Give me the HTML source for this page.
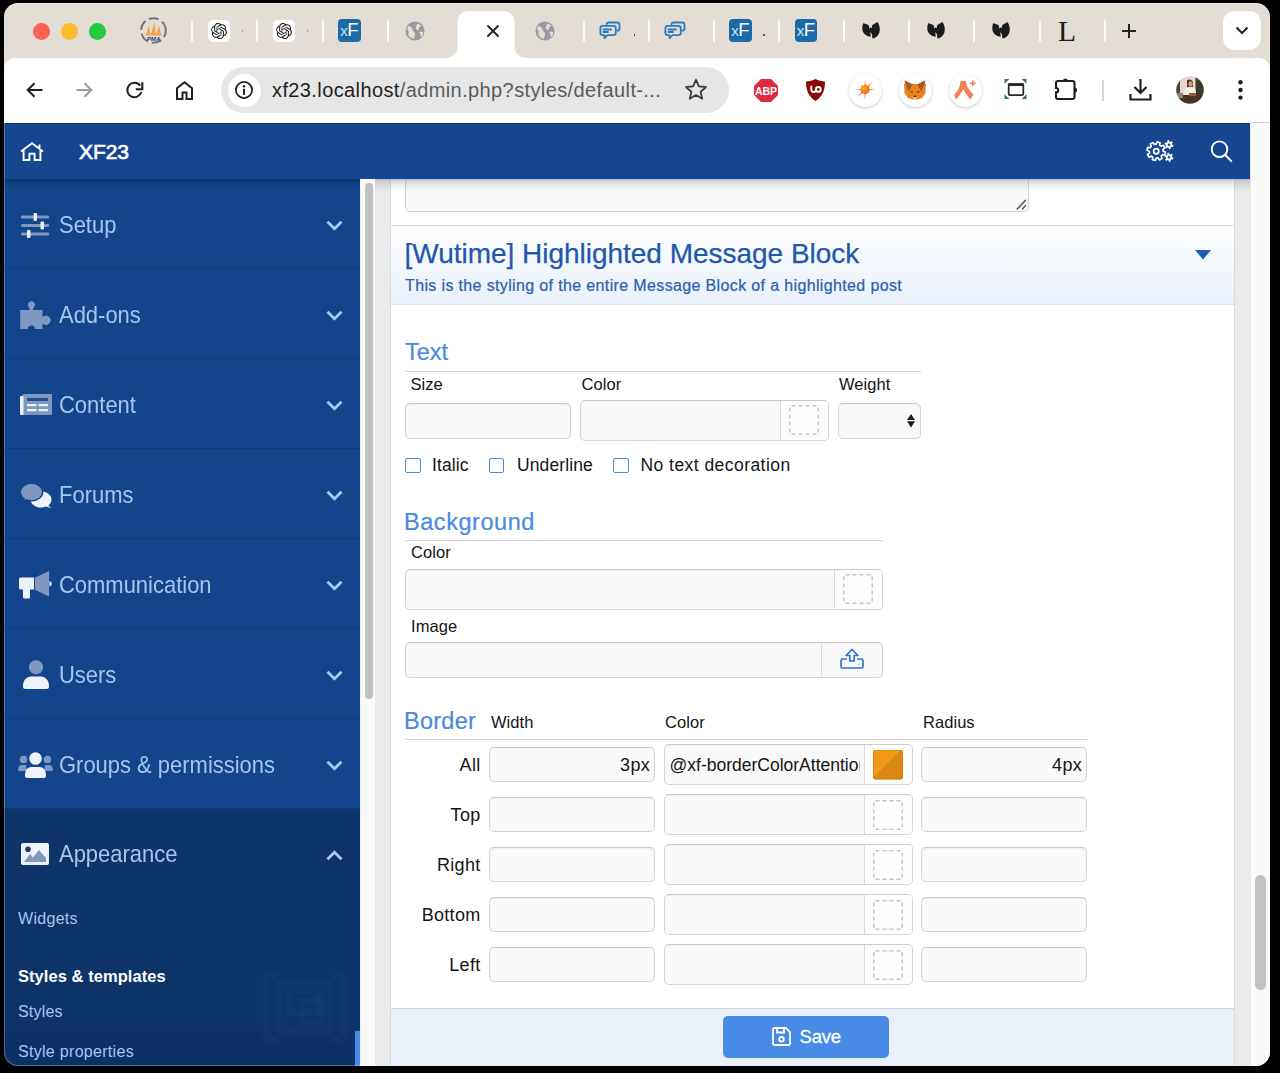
<!DOCTYPE html>
<html><head><meta charset="utf-8">
<style>
*{box-sizing:border-box;margin:0;padding:0}
html,body{width:1280px;height:1073px;overflow:hidden;background:#000;font-family:"Liberation Sans",sans-serif}
.a{position:absolute}
svg{position:absolute;overflow:visible}
#win{position:absolute;left:4px;top:3px;width:1266px;height:1063px;border-radius:14px;overflow:hidden;background:#e4ddd6}
/* coordinates inside #win are page coords minus (4,3) -> use page coords via #pg wrapper */
#pg{position:absolute;left:-4px;top:-3px;width:1280px;height:1073px}
.dot{position:absolute;width:17px;height:17px;border-radius:50%}
.sep{position:absolute;top:20px;width:2px;height:22px;background:#fbfaf9;border-radius:1px}
#toolbar{position:absolute;left:4px;top:58px;width:1266px;height:65px;background:#fff;border-radius:11px 11px 0 0}
#url{position:absolute;left:221px;top:67px;width:508px;height:46px;border-radius:23px;background:#e6e6e6}
#hdr{position:absolute;left:4px;top:123px;width:1246px;height:56px;background:#15468f;border-top:1px solid #0f3a76}
#side{position:absolute;left:4px;top:179px;width:356px;height:887px;background:#12458b;overflow:hidden}
#sscroll{position:absolute;left:360px;top:179px;width:15px;height:887px;background:#f8f8f8;border-left:1px solid #f0f0f0}
#content{position:absolute;left:375px;top:179px;width:875px;height:887px;background:#eaeaea;overflow:hidden}
#pscroll{position:absolute;left:1250px;top:123px;width:20px;height:943px;background:#f9f9f9;border-left:1px solid #e8e8e8}

.inp{position:absolute;background:#f9f9f9;border:1px solid #d5d5d5;border-top-color:#cbcbcb;border-radius:5px;box-shadow:inset 0 1px 1px rgba(0,0,0,.04)}
.lbl{position:absolute;font-size:16.5px;line-height:20px;color:#141414;white-space:nowrap;letter-spacing:0.05px}
.h3{position:absolute;font-size:23.5px;line-height:28px;color:#4a89dc;white-space:nowrap;-webkit-text-stroke:0.2px #4a89dc}
.rule{position:absolute;height:1px;background:#d3d3d3}
.swd{position:absolute;border:1.3px dashed #cdcdcd;border-radius:2px}
.cb{position:absolute;width:15.5px;height:15.5px;border:1.8px solid #4a8ad9;border-radius:2px;background:#fff}
.cbl{position:absolute;font-size:17.5px;line-height:22px;color:#141414;white-space:nowrap;letter-spacing:0.1px}
.rl{position:absolute;font-size:18px;line-height:22px;color:#141414;white-space:nowrap;text-align:right;width:80px;letter-spacing:0.3px}
</style></head><body>
<div id="win"><div id="pg">
  <!-- traffic lights -->
  <div class="dot" style="left:33px;top:22.5px;background:#fe5f57"></div>
  <div class="dot" style="left:61px;top:22.5px;background:#febc2e"></div>
  <div class="dot" style="left:88.5px;top:22.5px;background:#28c840"></div>


<!-- tab strip -->
<div class="sep" style="left:191.25px"></div>
<div class="sep" style="left:256.25px"></div>
<div class="sep" style="left:321.75px"></div>
<div class="sep" style="left:386.75px"></div>
<div class="sep" style="left:582.75px"></div>
<div class="sep" style="left:647.75px"></div>
<div class="sep" style="left:712.75px"></div>
<div class="sep" style="left:777.75px"></div>
<div class="sep" style="left:843.25px"></div>
<div class="sep" style="left:908.25px"></div>
<div class="sep" style="left:973.25px"></div>
<div class="sep" style="left:1038.75px"></div>
<div class="sep" style="left:1103.75px"></div>
<svg style="left:140px;top:17px" width="27" height="27" viewBox="0 0 27 27"><circle cx="13.500" cy="13.500" r="12.300" fill="none" stroke="#7a746f" stroke-width="2" stroke-dasharray="10 4" stroke-dashoffset="3"/><path d="M5.500 18.500C7 15 8 12 9 8.500L10.500 18.500zM10.500 18.500C12 14 13 10 14.500 5.500L16 18.500zM15.500 18.500C17 15 18 12 19 9L21.500 18.500z" fill="#f5a24a"/><text x="13.500" y="23.800" font-family="Liberation Sans" font-weight="700" font-style="italic" font-size="6.200" fill="#2e3f80" text-anchor="middle">PMA</text></svg>
<div class="a" style="left:208px;top:19.5px;width:22px;height:22.5px;border-radius:5px;background:#fff"></div>
<svg style="left:211.0px;top:22.5px" width="16" height="16" viewBox="0 0 24 24"><path fill="#1a1a1a" d="M22.2819 9.8211a5.9847 5.9847 0 0 0-.5157-4.9108 6.0462 6.0462 0 0 0-6.5098-2.9A6.0651 6.0651 0 0 0 4.9807 4.1818a5.9847 5.9847 0 0 0-3.9977 2.9 6.0462 6.0462 0 0 0 .7427 7.0966 5.98 5.98 0 0 0 .511 4.9107 6.051 6.051 0 0 0 6.5146 2.9001A5.9847 5.9847 0 0 0 13.2599 24a6.0557 6.0557 0 0 0 5.7718-4.2058 5.9894 5.9894 0 0 0 3.9977-2.9001 6.0557 6.0557 0 0 0-.7475-7.0729zm-9.022 12.6081a4.4755 4.4755 0 0 1-2.8764-1.0408l.1419-.0804 4.7783-2.7582a.7948.7948 0 0 0 .3927-.6813v-6.7369l2.02 1.1686a.071.071 0 0 1 .038.052v5.5826a4.504 4.504 0 0 1-4.4945 4.4944zm-9.6607-4.1254a4.4708 4.4708 0 0 1-.5346-3.0137l.142.0852 4.783 2.7582a.7712.7712 0 0 0 .7806 0l5.8428-3.3685v2.3324a.0804.0804 0 0 1-.0332.0615L9.74 19.9502a4.4992 4.4992 0 0 1-6.1408-1.6464zM2.3408 7.8956a4.485 4.485 0 0 1 2.3655-1.9728V11.6a.7664.7664 0 0 0 .3879.6765l5.8144 3.3543-2.0201 1.1685a.0757.0757 0 0 1-.071 0l-4.8303-2.7865A4.504 4.504 0 0 1 2.3408 7.872zm16.5963 3.8558L13.1038 8.364 15.1192 7.2a.0757.0757 0 0 1 .071 0l4.8303 2.7913a4.4944 4.4944 0 0 1-.6765 8.1042v-5.6772a.79.79 0 0 0-.407-.667zm2.0107-3.0231l-.142-.0852-4.7735-2.7818a.7759.7759 0 0 0-.7854 0L9.409 9.2297V6.8974a.0662.0662 0 0 1 .0284-.0615l4.8303-2.7866a4.4992 4.4992 0 0 1 6.6802 4.66zM8.3065 12.863l-2.02-1.1638a.0804.0804 0 0 1-.038-.0567V6.0742a4.4992 4.4992 0 0 1 7.3757-3.4537l-.142.0805L8.704 5.459a.7948.7948 0 0 0-.3927.6813zm1.0976-2.3654l2.602-1.4998 2.6069 1.4998v2.9994l-2.5974 1.4997-2.6067-1.4997Z"/></svg>
<div class="a" style="left:242px;top:30px;width:1px;height:2px;background:#999"></div>
<div class="a" style="left:273px;top:19.5px;width:22px;height:22.5px;border-radius:5px;background:#fff"></div>
<svg style="left:276.0px;top:22.5px" width="16" height="16" viewBox="0 0 24 24"><path fill="#1a1a1a" d="M22.2819 9.8211a5.9847 5.9847 0 0 0-.5157-4.9108 6.0462 6.0462 0 0 0-6.5098-2.9A6.0651 6.0651 0 0 0 4.9807 4.1818a5.9847 5.9847 0 0 0-3.9977 2.9 6.0462 6.0462 0 0 0 .7427 7.0966 5.98 5.98 0 0 0 .511 4.9107 6.051 6.051 0 0 0 6.5146 2.9001A5.9847 5.9847 0 0 0 13.2599 24a6.0557 6.0557 0 0 0 5.7718-4.2058 5.9894 5.9894 0 0 0 3.9977-2.9001 6.0557 6.0557 0 0 0-.7475-7.0729zm-9.022 12.6081a4.4755 4.4755 0 0 1-2.8764-1.0408l.1419-.0804 4.7783-2.7582a.7948.7948 0 0 0 .3927-.6813v-6.7369l2.02 1.1686a.071.071 0 0 1 .038.052v5.5826a4.504 4.504 0 0 1-4.4945 4.4944zm-9.6607-4.1254a4.4708 4.4708 0 0 1-.5346-3.0137l.142.0852 4.783 2.7582a.7712.7712 0 0 0 .7806 0l5.8428-3.3685v2.3324a.0804.0804 0 0 1-.0332.0615L9.74 19.9502a4.4992 4.4992 0 0 1-6.1408-1.6464zM2.3408 7.8956a4.485 4.485 0 0 1 2.3655-1.9728V11.6a.7664.7664 0 0 0 .3879.6765l5.8144 3.3543-2.0201 1.1685a.0757.0757 0 0 1-.071 0l-4.8303-2.7865A4.504 4.504 0 0 1 2.3408 7.872zm16.5963 3.8558L13.1038 8.364 15.1192 7.2a.0757.0757 0 0 1 .071 0l4.8303 2.7913a4.4944 4.4944 0 0 1-.6765 8.1042v-5.6772a.79.79 0 0 0-.407-.667zm2.0107-3.0231l-.142-.0852-4.7735-2.7818a.7759.7759 0 0 0-.7854 0L9.409 9.2297V6.8974a.0662.0662 0 0 1 .0284-.0615l4.8303-2.7866a4.4992 4.4992 0 0 1 6.6802 4.66zM8.3065 12.863l-2.02-1.1638a.0804.0804 0 0 1-.038-.0567V6.0742a4.4992 4.4992 0 0 1 7.3757-3.4537l-.142.0805L8.704 5.459a.7948.7948 0 0 0-.3927.6813zm1.0976-2.3654l2.602-1.4998 2.6069 1.4998v2.9994l-2.5974 1.4997-2.6067-1.4997Z"/></svg>
<div class="a" style="left:306.5px;top:30px;width:1px;height:2px;background:#999"></div>
<div class="a" style="left:338.0px;top:19px;width:22.5px;height:22.5px;border-radius:4px;background:#1b6aa6;color:#fff;font-size:15px;line-height:22px;text-align:center;letter-spacing:-0.3px"><span style="color:#cfe4f4">x</span><span style="font-size:18.5px">F</span></div>
<svg style="left:404.5px;top:21px" width="20" height="20" viewBox="0 0 20 20"><circle cx="10" cy="10" r="9.5" fill="#979a9e"/>
<path d="M3 5c2 0 3 1 4 2s0 2 1 3 2 1 2 3-1 3-1 5c-3-.5-5-2.5-6-5 1-1 1-2 0-3.5S2.5 6.5 3 5zM12 2.5c2 .5 3 1 4.5 2.5-1 .5-2 .5-2.5 1.5s.5 2-.5 2.5-2-.5-2.5-1.5 0-2 .5-3 .5-1 .5-2zM18 11c.5 2-.5 4-2 5.5-.5-1 0-2-.5-3s-1.5-1.5-1-2.5 2-.5 3.500 0z" fill="#e4ddd6"/></svg>
<svg style="left:444px;top:11px" width="84" height="47" viewBox="0 0 84 47"><path d="M0 47c8 0 13.5-4 13.5-11V11C13.5 5 18 0 24 0h36c6 0 10.5 5 10.5 11v25c0 7 5.5 11 13.5 11z" fill="#fff"/></svg>
<svg style="left:486.5px;top:25px" width="12" height="12" viewBox="0 0 12 12"><path d="M1 1l10 10M11 1L1 11" stroke="#1e1e1e" stroke-width="1.8" stroke-linecap="round"/></svg>
<svg style="left:535px;top:21px" width="20" height="20" viewBox="0 0 20 20"><circle cx="10" cy="10" r="9.5" fill="#979a9e"/>
<path d="M3 5c2 0 3 1 4 2s0 2 1 3 2 1 2 3-1 3-1 5c-3-.5-5-2.5-6-5 1-1 1-2 0-3.5S2.5 6.5 3 5zM12 2.5c2 .5 3 1 4.5 2.5-1 .5-2 .5-2.5 1.5s.5 2-.5 2.5-2-.5-2.5-1.5 0-2 .5-3 .5-1 .5-2zM18 11c.5 2-.5 4-2 5.5-.5-1 0-2-.5-3s-1.5-1.5-1-2.5 2-.5 3.500 0z" fill="#e4ddd6"/></svg>
<svg style="left:599px;top:20.5px" width="22" height="20" viewBox="0 0 22 20"><g fill="none" stroke="#2a7bbb" stroke-width="1.8" stroke-linejoin="round" stroke-linecap="round">
<path d="M7.5 3.3c.3-1.2 1-1.8 2.300-1.8h8.4c1.3 0 2.300 1 2.300 2.300v3.6c0 1.2-.9 2.2-2.1 2.3"/>
<path d="M3.8 4.8h10.6c1.4 0 2.4 1 2.4 2.4v4.5c0 1.4-1 2.4-2.4 2.4H8.5l-3 3v-3H3.8c-1.4 0-2.4-1-2.4-2.4V7.2c0-1.4 1-2.4 2.4-2.4z"/>
<path d="M4.5 8.5h7.5M4.5 11h4.5"/></g></svg>
<div class="a" style="left:633.5px;top:34px;width:1.5px;height:1.5px;background:#555"></div>
<svg style="left:664px;top:20.5px" width="22" height="20" viewBox="0 0 22 20"><g fill="none" stroke="#2a7bbb" stroke-width="1.8" stroke-linejoin="round" stroke-linecap="round">
<path d="M7.5 3.3c.3-1.2 1-1.8 2.300-1.8h8.4c1.3 0 2.300 1 2.300 2.300v3.6c0 1.2-.9 2.2-2.1 2.3"/>
<path d="M3.8 4.8h10.6c1.4 0 2.4 1 2.4 2.4v4.5c0 1.4-1 2.4-2.4 2.4H8.5l-3 3v-3H3.8c-1.4 0-2.4-1-2.4-2.4V7.2c0-1.4 1-2.4 2.4-2.4z"/>
<path d="M4.5 8.5h7.5M4.5 11h4.5"/></g></svg>
<div class="a" style="left:729.0px;top:19px;width:22.5px;height:22.5px;border-radius:4px;background:#1b6aa6;color:#fff;font-size:15px;line-height:22px;text-align:center;letter-spacing:-0.3px"><span style="color:#cfe4f4">x</span><span style="font-size:18.5px">F</span></div>
<div class="a" style="left:763px;top:34px;width:1.5px;height:1.5px;background:#555"></div>
<div class="a" style="left:794.5px;top:19px;width:22.5px;height:22.5px;border-radius:4px;background:#1b6aa6;color:#fff;font-size:15px;line-height:22px;text-align:center;letter-spacing:-0.3px"><span style="color:#cfe4f4">x</span><span style="font-size:18.5px">F</span></div>
<svg style="left:861.5px;top:22px" width="19" height="17" viewBox="0 0 19 17"><path d="M1.2 1.2C3 1.600 5 2.400 6.700 3.300L7.400 6.700 8.600 5.200 9.600 6.200 10.300 3C12 2 13.800 1 15.400 .1C17.600 3 18.400 7 17.400 10.500 16.200 14 13.500 16 10.300 16.600 10.500 13.500 9.800 11 8.100 10.300 8.600 11.500 8.800 13 8.600 14.700 5 14.500 1.800 12.500.6 9 0 6.500.3 3.500 1.200 1.200Z" fill="#1b1b1b"/></svg><svg style="left:927.0px;top:22px" width="19" height="17" viewBox="0 0 19 17"><path d="M1.2 1.2C3 1.600 5 2.400 6.700 3.300L7.400 6.700 8.600 5.200 9.600 6.200 10.300 3C12 2 13.800 1 15.400 .1C17.600 3 18.400 7 17.400 10.500 16.200 14 13.500 16 10.300 16.600 10.500 13.500 9.800 11 8.100 10.300 8.600 11.500 8.800 13 8.600 14.700 5 14.500 1.800 12.500.6 9 0 6.500.3 3.500 1.200 1.200Z" fill="#1b1b1b"/></svg><svg style="left:992.0px;top:22px" width="19" height="17" viewBox="0 0 19 17"><path d="M1.2 1.2C3 1.600 5 2.400 6.700 3.300L7.400 6.700 8.600 5.200 9.600 6.200 10.300 3C12 2 13.800 1 15.400 .1C17.600 3 18.400 7 17.400 10.500 16.200 14 13.500 16 10.300 16.600 10.500 13.500 9.800 11 8.100 10.300 8.600 11.500 8.800 13 8.600 14.700 5 14.500 1.800 12.500.6 9 0 6.500.3 3.500 1.200 1.200Z" fill="#1b1b1b"/></svg>
<div class="a" style="left:1058px;top:14px;font-family:'Liberation Serif';font-size:29.5px;line-height:34px;color:#1b1b1b">L</div>
<svg style="left:1121px;top:23px" width="16" height="16" viewBox="0 0 16 16"><path d="M8 1v14M1 8h14" stroke="#222" stroke-width="2"/></svg>
<div class="a" style="left:1223px;top:11px;width:38px;height:39px;border-radius:12px;background:#fff"></div>
<svg style="left:1235px;top:26px" width="14" height="9" viewBox="0 0 14 9"><path d="M1.5 1.5l5.5 5.5 5.5-5.5" fill="none" stroke="#222" stroke-width="2"/></svg>

  <div id="toolbar"></div>
  <div id="url"></div>

  <!-- toolbar icons -->
  <svg style="left:26px;top:82px" width="17" height="16" viewBox="0 0 17 16"><path d="M16.5 8H2M8.5 1.2L1.7 8l6.8 6.8" fill="none" stroke="#1f1f1f" stroke-width="2"/></svg>
  <svg style="left:76px;top:82px" width="17" height="16" viewBox="0 0 17 16"><path d="M.5 8H15M8.5 1.2L15.3 8l-6.8 6.8" fill="none" stroke="#9b9b9b" stroke-width="2"/></svg>
  <svg style="left:126px;top:82px" width="17" height="17" viewBox="0 0 17 17"><path d="M15.400 10A7.200 7.200 0 1 1 14.200 3.600" fill="none" stroke="#1f1f1f" stroke-width="2"/><path d="M16.300 .3V7.300H9.800" fill="none" stroke="#1f1f1f" stroke-width="2.100"/></svg>
  <svg style="left:176px;top:81px" width="17" height="19" viewBox="0 0 17 19"><path d="M1 18V7.2L8.5 1.3 16 7.2V18h-5.5v-6.5h-4V18z" fill="none" stroke="#1f1f1f" stroke-width="2" stroke-linejoin="miter"/></svg>
  <div class="a" style="left:227.5px;top:73.5px;width:33px;height:33px;border-radius:50%;background:#fff"></div>
  <svg style="left:235px;top:81px" width="18" height="18" viewBox="0 0 18 18"><circle cx="9" cy="9" r="8.1" fill="none" stroke="#1f1f1f" stroke-width="1.8"/><circle cx="9" cy="5.3" r="1.2" fill="#1f1f1f"/><path d="M9 7.8v6" stroke="#1f1f1f" stroke-width="1.9"/></svg>
  <div class="a" style="left:272px;top:77px;font-size:20px;line-height:26px;letter-spacing:0.39px;color:#1f1f1f;white-space:nowrap">xf23.localhost<span style="color:#5b5b5b">/admin.php?styles/default-...</span></div>
  <svg style="left:684px;top:78px" width="24" height="23" viewBox="0 0 24 23"><path d="M12 1.8l2.9 6.6 7.1.6-5.400 4.7 1.600 7-6.200-3.700-6.200 3.700 1.600-7L2 9l7.1-.6z" fill="none" stroke="#3a3a3a" stroke-width="1.8" stroke-linejoin="round"/></svg>
  <svg style="left:753.5px;top:78.5px" width="24" height="23" viewBox="0 0 24 23"><path d="M7 0h10l7 7v9l-7 7H7l-7-7V7z" fill="#e0283f"/><text x="12" y="16" font-family="Liberation Sans" font-weight="700" font-size="10.5" fill="#fff" text-anchor="middle">ABP</text></svg>
  <svg style="left:806px;top:79px" width="19" height="22" viewBox="0 0 19 22"><path d="M9.500 0C6.500 1.500 3.500 2.500 0 2.500c0 9 2.500 15 9.500 19.500C16.500 17.500 19 11.500 19 2.500 15.500 2.500 12.500 1.500 9.500 0z" fill="#8a0808"/><path d="M5.300 6.800v3.800a2.400 2.400 0 0 0 4.800 0" fill="none" stroke="#fff" stroke-width="1.900"/><circle cx="12.300" cy="10.400" r="2.400" fill="none" stroke="#fff" stroke-width="1.900"/></svg>
  <div class="a" style="left:848.5px;top:73.5px;width:33px;height:33px;border-radius:50%;background:#fff;box-shadow:0 1px 3px rgba(0,0,0,.22)"></div>
  <div class="a" style="left:898.5px;top:73.5px;width:33px;height:33px;border-radius:50%;background:#fff;box-shadow:0 1px 3px rgba(0,0,0,.22)"></div>
  <div class="a" style="left:948.5px;top:73.5px;width:33px;height:33px;border-radius:50%;background:#fff;box-shadow:0 1px 3px rgba(0,0,0,.22)"></div>
  <svg style="left:855px;top:80px" width="22" height="22" viewBox="0 0 22 22"><defs><radialGradient id="sg" cx="40%" cy="40%" r="60%"><stop offset="0" stop-color="#ffb21a"/><stop offset="1" stop-color="#f0621a"/></radialGradient></defs><path d="M11.10 9.50L10.00 0.00L8.90 9.50ZM8.90 9.50L10.00 20.00L11.10 9.50ZM10.00 10.60L20.50 9.50L10.00 8.40ZM10.00 8.40L0.00 9.50L10.00 10.60ZM10.78 10.28L18.13 1.37L9.22 8.72ZM9.22 8.72L1.87 17.63L10.78 10.28ZM10.78 8.72L5.76 5.26L9.22 10.28ZM9.22 10.28L14.24 13.74L10.78 8.72Z" fill="#f27a2c"/><circle cx="10" cy="9.5" r="4.600" fill="url(#sg)"/></svg>
  <svg style="left:904px;top:80px" width="22" height="20" viewBox="0 0 22 20"><path d="M0 4L3 1.500 8 4H14L19 1.500 22 4 21.500 13 18 18 13 19.500H9L4 18 .5 13z" fill="#e9821f"/><path d="M.3 .3L8.800 4.500 4.500 11.500zM21.700 .3L13.200 4.500 17.500 11.500z" fill="#a2582a"/><path d="M6 11.500h3l-1 1.500zM13 11.500h3l-2 1.500z" fill="#3a2210"/><path d="M9.500 15.800h3L11 17.500z" fill="#2a1608"/><path d="M9 17.500h4L11 19.800z" fill="#e8dcd0"/></svg>
  <svg style="left:954px;top:80px" width="22" height="20" viewBox="0 0 22 20"><path d="M6.500 1H12C12 6 15 10 19.500 14.500L16.500 19.500C13.500 16 11 12.500 9.300 9 7.500 12.500 5 16 2 19.500L0 15C4 11 6.500 6 6.500 1Z" fill="#f47f56"/><path d="M18.800 .6v5.400M16.100 3.300h5.400" stroke="#f47f56" stroke-width="1.700"/></svg>
  <svg style="left:1003.500px;top:78px" width="23" height="22" viewBox="0 0 23 22"><path d="M.5 1h4.800L.5 5.800zM22.500 1h-4.800L22.500 5.800zM.5 21h4.800L.5 16.200zM22.500 21h-4.800L22.500 16.200z" fill="#2b7a34"/><rect x="4.700" y="6.200" width="14.600" height="11" rx="1.500" fill="none" stroke="#2a2a2a" stroke-width="1.800"/><rect x="3.800" y="5.300" width="16.400" height="2.800" rx="1" fill="#2a2a2a"/></svg>
  <svg style="left:1054px;top:77px" width="25" height="24" viewBox="0 0 25 24"><path d="M4 4H18.500A2 2 0 0 1 20.500 6V20A2 2 0 0 1 18.500 22H4A2 2 0 0 1 2 20V15.400A2.200 2.200 0 0 0 2 11V6A2 2 0 0 1 4 4Z" fill="none" stroke="#1f1f1f" stroke-width="2.100"/><path d="M9 4A2.500 2.500 0 0 1 14 4ZM20.500 10.500A2.600 2.600 0 0 1 20.500 15.700Z" fill="#1f1f1f"/></svg>
  <div class="a" style="left:1101.5px;top:80px;width:2px;height:21px;background:#d7d3ce"></div>
  <svg style="left:1129px;top:79px" width="23" height="22" viewBox="0 0 23 22"><path d="M11.5 0v14M5.500 8l6 6 6-6" fill="none" stroke="#1f1f1f" stroke-width="2.2"/><path d="M1.5 15v5.5h20V15" fill="none" stroke="#1f1f1f" stroke-width="2.2"/></svg>
  <svg style="left:1176px;top:76px" width="28" height="28" viewBox="0 0 28 28"><defs><clipPath id="av"><circle cx="14" cy="14" r="13.8"/></clipPath><filter id="avb" x="-10%" y="-10%" width="120%" height="120%"><feGaussianBlur stdDeviation="0.7"/></filter></defs><g clip-path="url(#av)"><g filter="url(#avb)"><rect width="28" height="28" fill="#e6d6d2"/><rect x="-2" y="0" width="6" height="28" fill="#3f4a3c"/><rect x="19.500" y="0" width="10" height="28" fill="#3b3e2c"/><path d="M11 4c3-1.500 6 0 6 3v5c-1 1-5 1-6 0z" fill="#5a2e1e"/><ellipse cx="14.500" cy="8" rx="2.200" ry="2.800" fill="#c89a80"/><path d="M7.500 19c0-5 2.500-8 5-8h4c2 0 3.500 3 3.500 6v3z" fill="#f1ede8"/><rect x="0" y="19" width="28" height="10" fill="#4c3022"/><rect x="1" y="17" width="6" height="5" fill="#8a8470"/><rect x="13" y="17" width="7" height="3" fill="#9a5a3c"/></g></g></svg>
  <svg style="left:1237.500px;top:80px" width="5" height="20" viewBox="0 0 5 20"><circle cx="2.500" cy="2.300" r="2.200" fill="#1f1f1f"/><circle cx="2.500" cy="10" r="2.200" fill="#1f1f1f"/><circle cx="2.500" cy="17.600" r="2.200" fill="#1f1f1f"/></svg>
  <div id="hdr"></div>
  <svg style="left:20px;top:141.5px" width="24" height="19" viewBox="0 0 24 19"><path d="M1 9.500L12 1.200 23 9.500M3.600 7.600V18h5.800v-6.300h5.200V18h5.800V7.600M19.500 2.500v4.500" fill="none" stroke="#fff" stroke-width="1.900" stroke-linejoin="miter"/></svg>
  <div class="a" style="left:79px;top:137px;font-size:21px;line-height:30px;font-weight:400;-webkit-text-stroke:0.7px #fff;color:#fff;letter-spacing:-0.1px">XF23</div>
  <svg style="left:1146px;top:140px" width="30" height="24" viewBox="0 0 30 24"><path d="M17.20 11.20 L19.46 12.08 L18.68 15.01 L16.29 14.66 L15.15 16.15 L16.13 18.37 L13.50 19.89 L12.06 17.95 L10.20 18.20 L9.32 20.46 L6.39 19.68 L6.74 17.29 L5.25 16.15 L3.03 17.13 L1.51 14.50 L3.45 13.06 L3.20 11.20 L0.94 10.32 L1.72 7.39 L4.11 7.74 L5.25 6.25 L4.27 4.03 L6.90 2.51 L8.34 4.45 L10.20 4.20 L11.08 1.94 L14.01 2.72 L13.66 5.11 L15.15 6.25 L17.37 5.27 L18.89 7.90 L16.95 9.34Z" fill="none" stroke="#fff" stroke-width="1.7" stroke-linejoin="round"/><circle cx="10.2" cy="11.2" r="2.6" fill="none" stroke="#fff" stroke-width="1.7"/><path d="M26.20 4.70 L27.56 5.28 L26.98 7.00 L25.55 6.63 L24.60 7.47 L24.78 8.94 L23.00 9.30 L22.60 7.87 L21.40 7.47 L20.22 8.36 L19.02 7.00 L20.05 5.94 L19.80 4.70 L18.44 4.12 L19.02 2.40 L20.45 2.77 L21.40 1.93 L21.22 0.46 L23.00 0.10 L23.40 1.53 L24.60 1.93 L25.78 1.04 L26.98 2.40 L25.95 3.46Z M24.3 4.7A1.3 1.3 0 1 0 21.7 4.7A1.3 1.3 0 1 0 24.3 4.7Z" fill="#fff" fill-rule="evenodd"/><path d="M26.20 17.30 L27.56 17.88 L26.98 19.60 L25.55 19.23 L24.60 20.07 L24.78 21.54 L23.00 21.90 L22.60 20.47 L21.40 20.07 L20.22 20.96 L19.02 19.60 L20.05 18.54 L19.80 17.30 L18.44 16.72 L19.02 15.00 L20.45 15.37 L21.40 14.53 L21.22 13.06 L23.00 12.70 L23.40 14.13 L24.60 14.53 L25.78 13.64 L26.98 15.00 L25.95 16.06Z M24.3 17.3A1.3 1.3 0 1 0 21.7 17.3A1.3 1.3 0 1 0 24.3 17.3Z" fill="#fff" fill-rule="evenodd"/></svg>
  <svg style="left:1210px;top:140px" width="23" height="23" viewBox="0 0 23 23"><circle cx="9.500" cy="9.200" r="7.800" fill="none" stroke="#fff" stroke-width="1.900"/><path d="M15 14.800l6.300 6.300" stroke="#fff" stroke-width="2" stroke-linecap="round"/></svg>
<div id="side">
<div class="a" style="left:0;top:0px;width:356px;height:90px;border-bottom:1px solid #0e3b78"></div>
<div class="a" style="left:0;top:90px;width:356px;height:90px;border-bottom:1px solid #0e3b78"></div>
<div class="a" style="left:0;top:180px;width:356px;height:90px;border-bottom:1px solid #0e3b78"></div>
<div class="a" style="left:0;top:270px;width:356px;height:90px;border-bottom:1px solid #0e3b78"></div>
<div class="a" style="left:0;top:360px;width:356px;height:90px;border-bottom:1px solid #0e3b78"></div>
<div class="a" style="left:0;top:450px;width:356px;height:90px;border-bottom:1px solid #0e3b78"></div>
<div class="a" style="left:0;top:540px;width:356px;height:90px;border-bottom:1px solid #0e3b78"></div>
<div class="a" style="left:0;top:630px;width:356px;height:257px;background:#0c3468"></div>
<div class="a" style="left:0;top:852px;width:356px;height:35px;background:#0b3066"></div>
<div class="a" style="left:-4px;top:-179px"><svg style="left:262px;top:971px" width="85" height="72" viewBox="0 0 85 72"><g fill="none" stroke="rgba(120,160,230,0.04)" stroke-width="7"><path d="M4 4h12M69 4h12M4 4v64M81 4v64M4 68h12M69 68h12"/><rect x="16" y="12" width="53" height="48" rx="4"/><rect x="26" y="20" width="30" height="22"/><rect x="40" y="30" width="20" height="22"/></g></svg></div>
<div class="a" style="left:351px;top:852px;width:5px;height:35px;background:#4a8ae5"></div>
<div class="a" style="left:0;top:0;width:356px;height:12px;background:linear-gradient(rgba(0,15,50,.32),rgba(0,15,50,.14) 4px,rgba(0,15,50,0) 10px)"></div>
</div>
<div class="a" style="left:59px;top:180px;height:90px;line-height:90px;font-size:24px;color:#a6c6f2;white-space:nowrap;transform:scaleX(0.915);transform-origin:0 0">Setup</div>
<svg style="left:21px;top:213px" width="28" height="25" viewBox="0 0 28 25"><g fill="#8097c2"><rect x="0" y="2.5" width="28" height="3" rx="1"/><rect x="0" y="11" width="28" height="3" rx="1"/><rect x="0" y="19.5" width="28" height="3" rx="1"/></g><g fill="#eef3fb"><rect x="12.5" y="0" width="3.5" height="8" rx="1"/><rect x="19.5" y="8.5" width="3.5" height="8" rx="1"/><rect x="6" y="17" width="3.5" height="8" rx="1"/></g></svg>
<svg style="left:326.300px;top:220px" width="17" height="11" viewBox="0 0 17 11"><path d="M1.5 1.7l7 7 7-7" fill="none" stroke="#a8c9f5" stroke-width="2.8"/></svg>
<div class="a" style="left:59px;top:270px;height:90px;line-height:90px;font-size:24px;color:#a6c6f2;white-space:nowrap;transform:scaleX(0.915);transform-origin:0 0">Add-ons</div>
<svg style="left:19.5px;top:301px" width="32" height="28" viewBox="0 0 32 28"><path d="M0.2 9H9.600V7A3.600 3.600 0 1 1 13.200 7V9H22.500V15.500H23.500A4.500 4.500 0 1 1 23.500 23H22.500V28H15A3.600 3.600 0 1 0 7.800 28H0.200Z" fill="#8097c2"/></svg>
<svg style="left:326.300px;top:310px" width="17" height="11" viewBox="0 0 17 11"><path d="M1.5 1.7l7 7 7-7" fill="none" stroke="#a8c9f5" stroke-width="2.8"/></svg>
<div class="a" style="left:59px;top:360px;height:90px;line-height:90px;font-size:24px;color:#a6c6f2;white-space:nowrap;transform:scaleX(0.915);transform-origin:0 0">Content</div>
<svg style="left:19.5px;top:394px" width="32" height="21" viewBox="0 0 32 21"><rect x="2.5" y="0" width="29.5" height="21" rx="1" fill="#8097c2"/><rect x="0" y="2" width="3.5" height="19" rx="1" fill="#eef3fb"/><rect x="7" y="4" width="21" height="3" fill="#244f8e"/><rect x="7" y="10" width="9.5" height="2.200" fill="#eef3fb"/><rect x="18.500" y="10" width="9.5" height="2.200" fill="#eef3fb"/><rect x="7" y="15" width="9.5" height="2.200" fill="#eef3fb"/><rect x="18.500" y="15" width="9.5" height="2.200" fill="#eef3fb"/></svg>
<svg style="left:326.300px;top:400px" width="17" height="11" viewBox="0 0 17 11"><path d="M1.5 1.7l7 7 7-7" fill="none" stroke="#a8c9f5" stroke-width="2.8"/></svg>
<div class="a" style="left:59px;top:450px;height:90px;line-height:90px;font-size:24px;color:#a6c6f2;white-space:nowrap;transform:scaleX(0.915);transform-origin:0 0">Forums</div>
<svg style="left:19.5px;top:482.5px" width="32" height="26" viewBox="0 0 32 26"><path d="M21 8.200c5.800 0 10.500 3.700 10.500 8.300 0 2.300-1.200 4.400-3.100 5.900L31.500 25.200 26 23.600c-1.500.6-3.200.9-5 .9-5.800 0-10.500-3.700-10.500-8.300S15.200 8.200 21 8.200z" fill="#eef3fb"/><path d="M11.500 .4C5.300.4.3 4.300.3 9.100c0 2.700 1.500 5 3.800 6.600L.5 18.300l6.300-1.300c1.400.5 3 .8 4.700.8 6.200 0 11.200-3.900 11.200-8.700S17.700.4 11.500.4z" fill="#8097c2" stroke="#13458a" stroke-width="1.400"/></svg>
<svg style="left:326.300px;top:490px" width="17" height="11" viewBox="0 0 17 11"><path d="M1.5 1.7l7 7 7-7" fill="none" stroke="#a8c9f5" stroke-width="2.8"/></svg>
<div class="a" style="left:59px;top:540px;height:90px;line-height:90px;font-size:24px;color:#a6c6f2;white-space:nowrap;transform:scaleX(0.915);transform-origin:0 0">Communication</div>
<svg style="left:19px;top:570.5px" width="33" height="28" viewBox="0 0 33 28"><path d="M0 8a1.5 1.5 0 0 1 1.5-1.5H15v12H11v7.500A1.5 1.5 0 0 1 9.5 27.500h-4A1.500 1.500 0 0 1 4 26V18.500H1.500A1.5 1.5 0 0 1 0 17z" fill="#eef3fb"/><path d="M16 6.800L30 0v25.500L16 18.800z" fill="#8097c2"/><path d="M30.500 10a2.800 2.800 0 0 1 0 5.500z" fill="#eef3fb"/></svg>
<svg style="left:326.300px;top:580px" width="17" height="11" viewBox="0 0 17 11"><path d="M1.5 1.7l7 7 7-7" fill="none" stroke="#a8c9f5" stroke-width="2.8"/></svg>
<div class="a" style="left:59px;top:630px;height:90px;line-height:90px;font-size:24px;color:#a6c6f2;white-space:nowrap;transform:scaleX(0.915);transform-origin:0 0">Users</div>
<svg style="left:22.5px;top:660px" width="26" height="29" viewBox="0 0 26 29"><circle cx="13" cy="7.200" r="7" fill="#8097c2"/><path d="M0 26c0-6 4-9.500 8-9.500h10c4 0 8 3.500 8 9.500v.500A2.500 2.500 0 0 1 23.500 29h-21A2.500 2.500 0 0 1 0 26.500z" fill="#eef3fb"/></svg>
<svg style="left:326.300px;top:670px" width="17" height="11" viewBox="0 0 17 11"><path d="M1.5 1.7l7 7 7-7" fill="none" stroke="#a8c9f5" stroke-width="2.8"/></svg>
<div class="a" style="left:59px;top:720px;height:90px;line-height:90px;font-size:24px;color:#a6c6f2;white-space:nowrap;transform:scaleX(0.915);transform-origin:0 0">Groups &amp; permissions</div>
<svg style="left:18px;top:752px" width="35" height="26" viewBox="0 0 35 26"><g fill="#8097c2"><circle cx="5.5" cy="7.500" r="3.800"/><circle cx="29.500" cy="7.500" r="3.800"/><path d="M0 18c0-3 1.500-5 4-5h4l1 6H1z"/><path d="M35 18c0-3-1.500-5-4-5h-4l-1 6h8z"/></g><circle cx="17.500" cy="6.500" r="6.300" fill="#eef3fb"/><path d="M7 23c0-5 3-8 6.500-8h8c3.500 0 6.500 3 6.500 8v.800A2.200 2.200 0 0 1 25.800 26H9.200A2.200 2.200 0 0 1 7 23.800z" fill="#eef3fb"/></svg>
<svg style="left:326.300px;top:760px" width="17" height="11" viewBox="0 0 17 11"><path d="M1.5 1.7l7 7 7-7" fill="none" stroke="#a8c9f5" stroke-width="2.8"/></svg>
<div class="a" style="left:59px;top:809px;height:90px;line-height:90px;font-size:24px;color:#a6c6f2;white-space:nowrap;transform:scaleX(0.915);transform-origin:0 0">Appearance</div>
<svg style="left:21px;top:843px" width="28" height="22" viewBox="0 0 28 22"><rect width="28" height="22" rx="2" fill="#eef3fb"/><path d="M3 19l6-8 3 3.500 6-7.500 7 8V19z" fill="#8097c2"/><circle cx="7" cy="6.300" r="2.800" fill="#1f3f70"/></svg>
<svg style="left:326.300px;top:849.5px" width="17" height="11" viewBox="0 0 17 11"><path d="M1.5 9.3L8.5 2.3l7 7" fill="none" stroke="#a8c9f5" stroke-width="2.8"/></svg>
<div class="a" style="left:18px;top:905.5px;font-size:16px;line-height:26px;letter-spacing:0.3px;color:#a6c6f2;white-space:nowrap">Widgets</div>
<div class="a" style="left:18px;top:962.5px;font-size:16.5px;line-height:26px;letter-spacing:0.05px;font-weight:700;color:#fff;white-space:nowrap">Styles &amp; templates</div>
<div class="a" style="left:18px;top:999px;font-size:16px;line-height:26px;letter-spacing:0.2px;color:#a6c6f2;white-space:nowrap">Styles</div>
<div class="a" style="left:18px;top:1039px;font-size:16px;line-height:26px;letter-spacing:0.3px;color:#a6c6f2;white-space:nowrap">Style properties</div>
  <div id="sscroll"></div>
  <div id="content"><div class="a" style="left:-375px;top:-179px;width:1280px;height:1073px">
<div class="a" style="left:390px;top:179px;width:845px;height:887px;background:#fff;border-left:1px solid #dadada;border-right:1px solid #dadada"></div>
<div class="inp" style="left:405px;top:150px;width:623.5px;height:61.5px"></div>
<svg style="left:1015px;top:199px" width="12" height="12" viewBox="0 0 12 12"><path d="M2.200 10L10.600 1.300M7.500 10L10.600 6.600" stroke="#4a4a4a" stroke-width="1.400" stroke-linecap="round"/></svg>
<div class="a" style="left:391px;top:225px;width:843px;height:1px;background:#dcdcdc"></div>
<div class="a" style="left:391px;top:226px;width:843px;height:79px;background:linear-gradient(#fdfeff,#e9f0fb);border-bottom:1px solid #dde3ec"></div>
<div class="a" style="left:404.5px;top:235.5px;font-size:28px;line-height:35px;letter-spacing:-0.02px;color:#1f58a9;white-space:nowrap;-webkit-text-stroke:0.25px #1f58a9">[Wutime] Highlighted Message Block</div>
<div class="a" style="left:405px;top:276px;font-size:16px;line-height:20px;letter-spacing:0.36px;color:#2a60ad;white-space:nowrap;-webkit-text-stroke:0.2px #2a60ad">This is the styling of the entire Message Block of a highlighted post</div>
<svg style="left:1195px;top:250px" width="16" height="9.500" viewBox="0 0 16 9.500"><path d="M0 0h16L8 9.500z" fill="#1c5cb5"/></svg>
<div class="h3" style="left:405px;top:337.5px">Text</div>
<div class="rule" style="left:405px;top:371px;width:516px"></div>
<div class="lbl" style="left:410.5px;top:373.8px">Size</div>
<div class="lbl" style="left:581.5px;top:373.8px">Color</div>
<div class="lbl" style="left:839px;top:373.8px">Weight</div>
<div class="inp" style="left:405px;top:402.5px;width:166px;height:36px"></div>
<div class="inp" style="left:580px;top:399.5px;width:248.5px;height:41.0px"></div><div class="a" style="left:780px;top:400.5px;width:1px;height:39.0px;background:#dadada"></div><div class="a" style="left:781.0px;top:400.5px;width:46.5px;height:39.0px;background:#fdfdfd;border-radius:0 4px 4px 0"></div><svg style="left:789.0px;top:405.0px" width="30" height="30" viewBox="0 0 30 30"><path d="M2.500 .75H27.500M2.500 29.250H27.500M.75 2.500V27.500M29.250 2.500V27.500" stroke="#c6c6c6" stroke-width="1.500" stroke-dasharray="4 3"/></svg>
<div class="inp" style="left:838px;top:402.5px;width:83px;height:36px"></div>
<svg style="left:907px;top:414px" width="8" height="13.500" viewBox="0 0 8 13.500"><path d="M4 0l4 6H0zM0 7.200h8l-4 6.200z" fill="#1a1a1a"/></svg>
<div class="cb" style="left:405px;top:457.5px"></div>
<div class="cbl" style="left:432px;top:454px">Italic</div>
<div class="cb" style="left:488.5px;top:457.5px"></div>
<div class="cbl" style="left:517px;top:454px">Underline</div>
<div class="cb" style="left:613px;top:457.5px"></div>
<div class="cbl" style="left:640.5px;top:454px;letter-spacing:0.45px">No text decoration</div>
<div class="h3" style="left:404px;top:507.5px;letter-spacing:0.55px">Background</div>
<div class="rule" style="left:405px;top:539.5px;width:478px"></div>
<div class="lbl" style="left:411px;top:542.3px">Color</div>
<div class="inp" style="left:405px;top:569px;width:478px;height:40.5px"></div><div class="a" style="left:834px;top:570px;width:1px;height:38.5px;background:#dadada"></div><div class="a" style="left:835.0px;top:570.0px;width:47.0px;height:38.5px;background:#fdfdfd;border-radius:0 4px 4px 0"></div><svg style="left:843.0px;top:574.25px" width="30" height="30" viewBox="0 0 30 30"><path d="M2.500 .75H27.500M2.500 29.250H27.500M.75 2.500V27.500M29.250 2.500V27.500" stroke="#c6c6c6" stroke-width="1.500" stroke-dasharray="4 3"/></svg>
<div class="lbl" style="left:411px;top:615.8px">Image</div>
<div class="inp" style="left:405px;top:641.5px;width:478px;height:36px"></div>
<div class="a" style="left:821px;top:642.5px;width:1px;height:34px;background:#dadada"></div>
<svg style="left:840px;top:648px" width="24" height="22" viewBox="0 0 24 22"><path d="M12 1.500l-6 6h3.800v5.500h4.400V7.500H18z" fill="none" stroke="#2f74c8" stroke-width="1.700" stroke-linejoin="round"/><path d="M7 11H2.500a1.500 1.500 0 0 0-1.500 1.500v6A1.5 1.5 0 0 0 2.500 20h19a1.500 1.500 0 0 0 1.500-1.500v-6a1.500 1.500 0 0 0-1.500-1.500H17M18.500 16.500h.8" fill="none" stroke="#2f74c8" stroke-width="1.700"/></svg>
<div class="h3" style="left:404px;top:707px;letter-spacing:0.25px">Border</div>
<div class="lbl" style="left:491px;top:712.3px">Width</div>
<div class="lbl" style="left:665px;top:712.3px">Color</div>
<div class="lbl" style="left:923px;top:712.3px">Radius</div>
<div class="rule" style="left:405px;top:738.5px;width:682px"></div>
<div class="rl" style="left:400.5px;top:753.5px">All</div>
<div class="inp" style="left:488.5px;top:747px;width:166.5px;height:35px"></div>
<div class="inp" style="left:921px;top:747px;width:166px;height:35px"></div>
<div class="inp" style="left:664px;top:744px;width:248.5px;height:41px"></div>
<div class="a" style="left:863.5px;top:745px;width:1px;height:39px;background:#dadada"></div><div class="a" style="left:864.5px;top:745px;width:47px;height:39px;background:#fdfdfd;border-radius:0 4px 4px 0"></div>
<div class="a" style="left:669.5px;top:753.5px;width:190px;overflow:hidden;font-size:17.5px;line-height:22px;color:#141414;white-space:nowrap">@xf-borderColorAttention</div>
<svg style="left:873px;top:749.5px" width="30" height="29.500" viewBox="0 0 30 29.500"><rect x="0" y="0" width="30" height="29.500" rx="2.500" fill="#d98913"/><path d="M2.500 0H27.500L0 27.500V2.500A2.500 2.500 0 0 1 2.500 0z" fill="#f29a17"/><rect x="0.500" y="0.500" width="29" height="28.500" rx="2" fill="none" stroke="#c47a12" stroke-width="1" opacity=".5"/></svg>
<div class="rl" style="left:570px;top:753.5px">3px</div>
<div class="rl" style="left:1002px;top:753.5px">4px</div>
<div class="rl" style="left:400.5px;top:803.5px">Top</div>
<div class="inp" style="left:488.5px;top:797px;width:166.5px;height:35px"></div>
<div class="inp" style="left:921px;top:797px;width:166px;height:35px"></div>
<div class="inp" style="left:664px;top:794px;width:248.5px;height:41px"></div><div class="a" style="left:863.5px;top:795px;width:1px;height:39px;background:#dadada"></div><div class="a" style="left:864.5px;top:795.0px;width:47.0px;height:39.0px;background:#fdfdfd;border-radius:0 4px 4px 0"></div><svg style="left:872.5px;top:799.5px" width="30" height="30" viewBox="0 0 30 30"><path d="M2.500 .75H27.500M2.500 29.250H27.500M.75 2.500V27.500M29.250 2.500V27.500" stroke="#c6c6c6" stroke-width="1.500" stroke-dasharray="4 3"/></svg>
<div class="rl" style="left:400.5px;top:853.5px">Right</div>
<div class="inp" style="left:488.5px;top:847px;width:166.5px;height:35px"></div>
<div class="inp" style="left:921px;top:847px;width:166px;height:35px"></div>
<div class="inp" style="left:664px;top:844px;width:248.5px;height:41px"></div><div class="a" style="left:863.5px;top:845px;width:1px;height:39px;background:#dadada"></div><div class="a" style="left:864.5px;top:845.0px;width:47.0px;height:39.0px;background:#fdfdfd;border-radius:0 4px 4px 0"></div><svg style="left:872.5px;top:849.5px" width="30" height="30" viewBox="0 0 30 30"><path d="M2.500 .75H27.500M2.500 29.250H27.500M.75 2.500V27.500M29.250 2.500V27.500" stroke="#c6c6c6" stroke-width="1.500" stroke-dasharray="4 3"/></svg>
<div class="rl" style="left:400.5px;top:903.5px">Bottom</div>
<div class="inp" style="left:488.5px;top:897px;width:166.5px;height:35px"></div>
<div class="inp" style="left:921px;top:897px;width:166px;height:35px"></div>
<div class="inp" style="left:664px;top:894px;width:248.5px;height:41px"></div><div class="a" style="left:863.5px;top:895px;width:1px;height:39px;background:#dadada"></div><div class="a" style="left:864.5px;top:895.0px;width:47.0px;height:39.0px;background:#fdfdfd;border-radius:0 4px 4px 0"></div><svg style="left:872.5px;top:899.5px" width="30" height="30" viewBox="0 0 30 30"><path d="M2.500 .75H27.500M2.500 29.250H27.500M.75 2.500V27.500M29.250 2.500V27.500" stroke="#c6c6c6" stroke-width="1.500" stroke-dasharray="4 3"/></svg>
<div class="rl" style="left:400.5px;top:953.5px">Left</div>
<div class="inp" style="left:488.5px;top:947px;width:166.5px;height:35px"></div>
<div class="inp" style="left:921px;top:947px;width:166px;height:35px"></div>
<div class="inp" style="left:664px;top:944px;width:248.5px;height:41px"></div><div class="a" style="left:863.5px;top:945px;width:1px;height:39px;background:#dadada"></div><div class="a" style="left:864.5px;top:945.0px;width:47.0px;height:39.0px;background:#fdfdfd;border-radius:0 4px 4px 0"></div><svg style="left:872.5px;top:949.5px" width="30" height="30" viewBox="0 0 30 30"><path d="M2.500 .75H27.500M2.500 29.250H27.500M.75 2.500V27.500M29.250 2.500V27.500" stroke="#c6c6c6" stroke-width="1.500" stroke-dasharray="4 3"/></svg>
<div class="a" style="left:391px;top:1008px;width:843px;height:58px;background:#e9f0fa;border-top:1px solid #d0d6de"></div>
<div class="a" style="left:722.5px;top:1016px;width:166px;height:42px;border-radius:5px;background:#478be6"></div>
<svg style="left:772px;top:1027px" width="19" height="19" viewBox="0 0 19 19"><path d="M1 2.500A1.500 1.500 0 0 1 2.500 1h11.500l4 4v11.500a1.500 1.500 0 0 1-1.500 1.500h-14A1.500 1.500 0 0 1 1 16.500z" fill="none" stroke="#fff" stroke-width="1.800"/><path d="M5 1.200v4.300h7V1.200" fill="none" stroke="#fff" stroke-width="1.800"/><circle cx="9.500" cy="12.300" r="2.300" fill="none" stroke="#fff" stroke-width="1.800"/></svg>
<div class="a" style="left:799.5px;top:1024.5px;font-size:18.5px;line-height:24px;letter-spacing:-0.2px;color:#fff;-webkit-text-stroke:0.3px #fff">Save</div>
<div class="a" style="left:375px;top:179px;width:875px;height:14px;background:linear-gradient(rgba(0,0,0,.2),rgba(0,0,0,.08) 5px,rgba(0,0,0,0))"></div><div class="a" style="left:375px;top:179px;width:875px;height:1px;background:rgba(160,190,235,.55)"></div>
  </div></div>
  <div id="pscroll"></div>
  <div class="a" style="left:1250px;top:122px;width:20px;height:1px;background:#d0d0d0"></div>
  <div class="a" style="left:364.5px;top:183px;width:8.5px;height:516px;border-radius:5px;background:#c1c1c1"></div>
  <div class="a" style="left:1255px;top:875px;width:11px;height:115px;border-radius:6px;background:#c2c2c2"></div>
</div></div>
<div class="a" style="left:4px;top:3px;width:1266px;height:1063px;border-radius:14px;border:1px solid rgba(255,255,255,.28)"></div>
</body></html>
